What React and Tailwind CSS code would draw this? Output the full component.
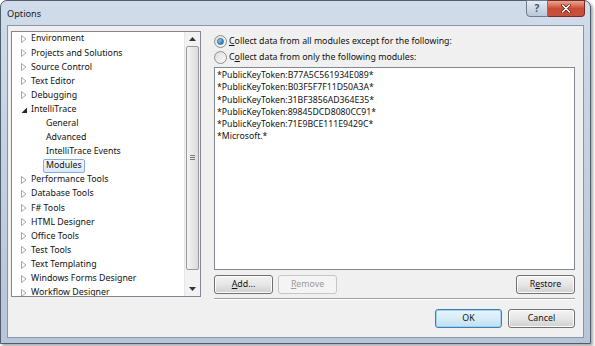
import React from "react";

const font = { fontFamily: '"Segoe UI", "Noto Sans", "Open Sans", sans-serif' };

function Collapsed() {
  return (
    <svg width="6" height="8" viewBox="0 0 6 8" className="shrink-0">
      <path d="M0.5 0.5 L5 4 L0.5 7.5 Z" fill="white" stroke="#a6a6a6" strokeWidth="1" />
    </svg>
  );
}
function Expanded() {
  return (
    <svg width="6" height="8" viewBox="0 0 6 8" className="shrink-0">
      <path d="M6 1.5 L6 7 L0.5 7 Z" fill="#262626" />
    </svg>
  );
}

const top = [
  "Environment",
  "Projects and Solutions",
  "Source Control",
  "Text Editor",
  "Debugging",
];
const after = [
  "Performance Tools",
  "Database Tools",
  "F# Tools",
  "HTML Designer",
  "Office Tools",
  "Test Tools",
  "Text Templating",
  "Windows Forms Designer",
  "Workflow Designer",
];

function Row({ label }) {
  return (
    <div className="h-[14.1px] flex items-center pl-[9px] gap-[4px] whitespace-nowrap">
      <Collapsed />
      <span>{label}</span>
    </div>
  );
}

function Child({ label, selected }) {
  return (
    <div className="h-[14.1px] flex items-center pl-[31px] whitespace-nowrap">
      {selected ? (
        <span className="px-[2px] h-[14px] flex items-center border border-[#84acdd] rounded-[2px] bg-gradient-to-b from-[#f2f8fe] to-[#dae9fa]">
          {label}
        </span>
      ) : (
        <span className="px-[3px]">{label}</span>
      )}
    </div>
  );
}

function Btn({ children, className = "", variant }) {
  let cls =
    "h-[19px] flex items-center justify-center rounded-[3px] border text-[8.8px] ";
  if (variant === "disabled") {
    cls += "border-[#c3c6c9] bg-[#f4f4f4] text-[#9a9a9a]";
  } else if (variant === "default") {
    cls +=
      "border-[#3c7fb1] bg-gradient-to-b from-[#e8f4fb] via-[#d6ecf8] to-[#bfe0f3] text-[#111] shadow-[inset_0_0_0_1px_#9fd3f2]";
  } else {
    cls +=
      "border-[#707070] bg-gradient-to-b from-[#f3f3f3] via-[#e6e6e6] to-[#d0d0d0] text-[#111] shadow-[inset_0_0_0_1px_#fcfcfc]";
  }
  return <div className={cls + " " + className}>{children}</div>;
}

function Radio({ checked }) {
  return (
    <div className="w-[13px] h-[13px] rounded-full border border-[#8f8f8f] bg-gradient-to-br from-[#dcdcdc] to-[#fafafa] flex items-center justify-center shrink-0">
      {checked && (
        <div className="w-[7px] h-[7px] rounded-full bg-gradient-to-br from-[#9bdcf9] to-[#1a6ca8] border border-[#2b6a9a]" />
      )}
    </div>
  );
}

export default function App() {
  return (
    <div className="w-[595px] h-[346px] bg-white relative overflow-hidden" style={font}>
      <div className="absolute left-0 top-0 w-[591px] h-[344px] rounded-t-[7px] border border-[#4f5d6d] bg-gradient-to-b from-[#d0dcea] via-[#c2d0df] to-[#b6c6d8] flex flex-col shadow-[2px_2px_3px_rgba(0,0,0,0.35)]">
        {/* title bar */}
        <div className="h-[24px] relative flex items-center pl-[6px]">
          <span className="text-[9.2px] text-[#1a1a1a] mt-[1px]">Options</span>
          <div className="absolute right-[5px] top-[-1px] flex">
            <div className="w-[22px] h-[17px] rounded-bl-[4px] border border-[#6b7c8e] bg-gradient-to-b from-[#e4ecf5] to-[#b8c8da] flex items-center justify-center text-[10px] text-[#44546a] font-bold">
              ?
            </div>
            <div className="w-[37px] h-[17px] rounded-br-[4px] border border-l-0 border-[#7a2a20] bg-gradient-to-b from-[#e4a796] via-[#cc4b32] to-[#c5523e] flex items-center justify-center">
              <svg width="10" height="9" viewBox="0 0 10 9">
                <path d="M1.5 1 L8.5 8 M8.5 1 L1.5 8" stroke="#5a1a10" strokeWidth="3" strokeLinecap="round" />
                <path d="M1.5 1 L8.5 8 M8.5 1 L1.5 8" stroke="white" strokeWidth="1.6" strokeLinecap="round" />
              </svg>
            </div>
          </div>
        </div>
        {/* client */}
        <div className="mx-[6px] mb-[5px] flex-1 bg-[#f0f0f0] border border-[#8796a8] relative text-[8.8px] text-[#111]">
          {/* tree */}
          <div className="absolute left-[3px] top-[5px] w-[190px] h-[266px] bg-white border border-[#828790] flex overflow-hidden">
            <div className="flex-1 pt-[0px] overflow-hidden">
              {top.map((t) => (
                <Row key={t} label={t} />
              ))}
              <div className="h-[14.1px] flex items-center pl-[9px] gap-[4px] whitespace-nowrap">
                <Expanded />
                <span>IntelliTrace</span>
              </div>
              <Child label="General" />
              <Child label="Advanced" />
              <Child label="IntelliTrace Events" />
              <Child label="Modules" selected />
              {after.map((t) => (
                <Row key={t} label={t} />
              ))}
            </div>
            {/* scrollbar */}
            <div className="w-[16px] flex flex-col bg-[#f2f2f2] border-l border-[#e6e6e6]">
              <div className="h-[14px] flex items-center justify-center">
                <svg width="7" height="4" viewBox="0 0 7 4">
                  <path d="M0 4 L3.5 0 L7 4 Z" fill="#333" />
                </svg>
              </div>
              <div className="mx-[1px] h-[224px] rounded-[2px] border border-[#9a9a9a] bg-gradient-to-r from-[#f4f4f4] to-[#dcdcdc] flex items-center justify-center">
                <svg width="5" height="6" viewBox="0 0 5 6">
                  <path d="M0 0.5 H5 M0 2.5 H5 M0 4.5 H5" stroke="#777" strokeWidth="1" />
                </svg>
              </div>
              <div className="flex-1" />
              <div className="h-[14px] flex items-center justify-center">
                <svg width="7" height="4" viewBox="0 0 7 4">
                  <path d="M0 0 L3.5 4 L7 0 Z" fill="#333" />
                </svg>
              </div>
            </div>
          </div>

          {/* right panel */}
          <div className="absolute left-[206px] top-[8px] w-[361px] flex flex-col">
            <div className="flex items-center gap-[2px] h-[15px]">
              <Radio checked />
              <span>
                <u>C</u>ollect data from all modules except for the following:
              </span>
            </div>
            <div className="flex items-center gap-[2px] h-[15px] mt-[1px]">
              <Radio />
              <span>
                C<u>o</u>llect data from only the following modules:
              </span>
            </div>
            <div className="mt-[2px] h-[203px] bg-white border border-[#828790] pl-[2px] pt-[1px] text-[8.7px] leading-[12.3px]">
              <div>*PublicKeyToken:B77A5C561934E089*</div>
              <div>*PublicKeyToken:B03F5F7F11D50A3A*</div>
              <div>*PublicKeyToken:31BF3856AD364E35*</div>
              <div>*PublicKeyToken:89845DCD8080CC91*</div>
              <div>*PublicKeyToken:71E9BCE111E9429C*</div>
              <div>*Microsoft.*</div>
            </div>
            <div className="mt-[5px] flex">
              <Btn className="w-[59px]">
                <span>
                  <u>A</u>dd...
                </span>
              </Btn>
              <Btn className="w-[59px] ml-[5px]" variant="disabled">
                <span>
                  <u>R</u>emove
                </span>
              </Btn>
              <div className="flex-1" />
              <Btn className="w-[59px]">
                <span>
                  R<u>e</u>store
                </span>
              </Btn>
            </div>
            <div className="mt-[4px] h-[2px] border-t border-[#a0a0a0] border-b border-b-white" />
          </div>

          {/* bottom buttons */}
          <div className="absolute right-[8px] top-[283px] flex gap-[6px]">
            <Btn className="w-[67px]" variant="default">
              OK
            </Btn>
            <Btn className="w-[67px]">Cancel</Btn>
          </div>
        </div>
      </div>
    </div>
  );
}
